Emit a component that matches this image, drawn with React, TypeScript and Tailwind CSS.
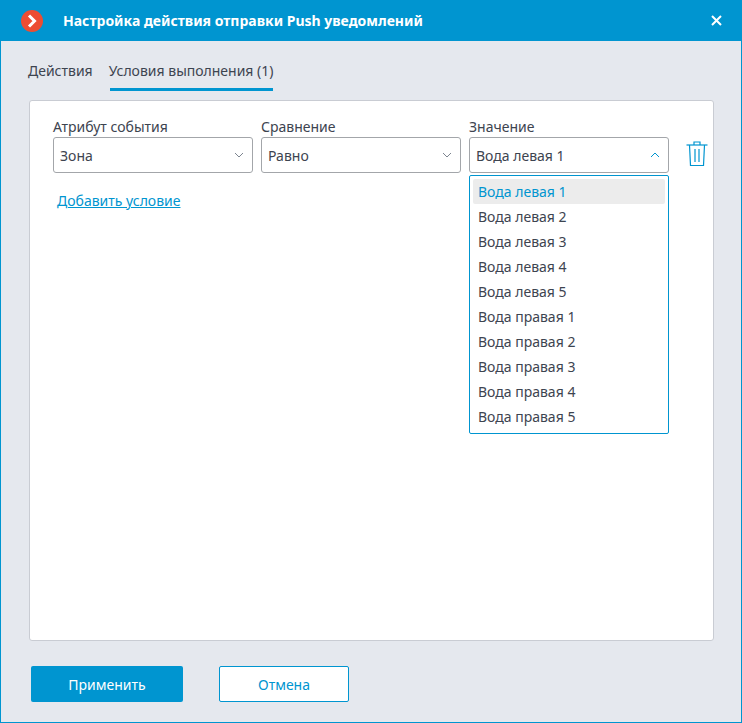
const font = { fontFamily: '"Noto Sans", "Open Sans", sans-serif' };

const values = [
  "Вода левая 1",
  "Вода левая 2",
  "Вода левая 3",
  "Вода левая 4",
  "Вода левая 5",
  "Вода правая 1",
  "Вода правая 2",
  "Вода правая 3",
  "Вода правая 4",
  "Вода правая 5",
];

function Chevron({ up }: { up?: boolean }) {
  return (
    <svg width="10" height="6" viewBox="0 0 10 6" fill="none" className="shrink-0">
      <path
        d={up ? "M1 5L5 1L9 5" : "M1 1L5 5L9 1"}
        stroke={up ? "#0095d0" : "#7d8590"}
        strokeWidth="1"
      />
    </svg>
  );
}

function Select({ label, value, up }: { label: string; value: string; up?: boolean }) {
  return (
    <div className="flex flex-col">
      <div className="h-[20px] text-[14px] leading-[20px] text-[#3d4450]">{label}</div>
      <div className="h-[36px] flex items-center justify-between pl-[6px] pr-[8px] rounded-[3px] border border-[#a3a6aa] bg-white text-[14px] text-[#3d4450]">
        <span>{value}</span>
        <Chevron up={up} />
      </div>
    </div>
  );
}

export default function App() {
  return (
    <div
      className="w-[742px] h-[723px] flex flex-col bg-[#e5e8ee] border-l border-r border-b border-[#0095d0] overflow-hidden"
      style={font}
    >
      <header className="h-[41px] shrink-0 -mx-px flex items-center bg-[#0095d0] pl-[21px] pr-[20px]">
        <svg width="22" height="22" viewBox="0 0 22 22" className="shrink-0">
          <circle cx="11" cy="11" r="11" fill="#ec4d32" />
          <path d="M8 5.5L13.5 11L8 16.5" fill="none" stroke="#ffffff" strokeWidth="3" />
        </svg>
        <div className="ml-[20px] flex-1 text-[14px] font-bold text-white whitespace-nowrap">
          Настройка действия отправки Push уведомлений
        </div>
        <svg width="11" height="11" viewBox="0 0 11 11" className="shrink-0">
          <path d="M1 1L10 10M10 1L1 10" stroke="#ffffff" strokeWidth="2" />
        </svg>
      </header>

      <nav className="h-[50px] shrink-0 flex pl-[27px] gap-[16px] text-[14px] text-[#3d4450] pt-[19px]">
        <div className="leading-[22px]">Действия</div>
        <div className="flex flex-col">
          <div className="leading-[22px]">Условия выполнения (1)</div>
          <div className="mt-[6px] h-[3px] mx-px bg-[#0095d0]" />
        </div>
      </nav>

      <main className="ml-[28px] mr-[27px] mt-[9px] h-[541px] shrink-0 rounded-[3px] border border-[#c9ccd3] bg-white pt-[16px] pl-[23px]">
        <div className="flex">
          <div className="grid grid-cols-[200px_200px_200px] gap-x-[8px]">
            <Select label="Атрибут события" value="Зона" />
            <Select label="Сравнение" value="Равно" />
            <div className="relative">
              <Select label="Значение" value="Вода левая 1" up />
              <ul className="absolute left-0 top-[58px] w-[200px] h-[259px] rounded-[2px] border border-[#0095d0] bg-white px-[3px] py-[3px] text-[14px] text-[#3d4450]">
                {values.map((v, i) => (
                  <li
                    key={v}
                    className={
                      i === 0
                        ? "h-[25px] leading-[25px] pl-[5px] rounded-[2px] bg-[#ececec] text-[#0095d0]"
                        : "h-[25px] leading-[25px] pl-[5px]"
                    }
                  >
                    {v}
                  </li>
                ))}
              </ul>
            </div>
          </div>
          <svg
            width="22"
            height="26"
            viewBox="0 0 22 26"
            fill="none"
            stroke="#0095d0"
            strokeWidth="1.2"
            className="ml-[17px] mt-[24px]"
          >
            <path d="M0.5 4H21.5" />
            <path d="M8 4V1H14V4" />
            <path d="M3.5 4L4.5 24.5H17.5L18.5 4" />
            <path d="M9 8V21M13 8V21" />
          </svg>
        </div>
        <a className="inline-block mt-[18px] ml-[4px] text-[14px] leading-[20px] text-[#0095d0] underline">
          Добавить условие
        </a>
      </main>

      <footer className="flex pl-[30px] mt-[25px] gap-[36px] text-[14px]">
        <button className="w-[152px] h-[36px] rounded-[2px] bg-[#0095d0] text-white">Применить</button>
        <button className="w-[130px] h-[36px] rounded-[2px] border border-[#0095d0] bg-white text-[#0095d0]">
          Отмена
        </button>
      </footer>
    </div>
  );
}
